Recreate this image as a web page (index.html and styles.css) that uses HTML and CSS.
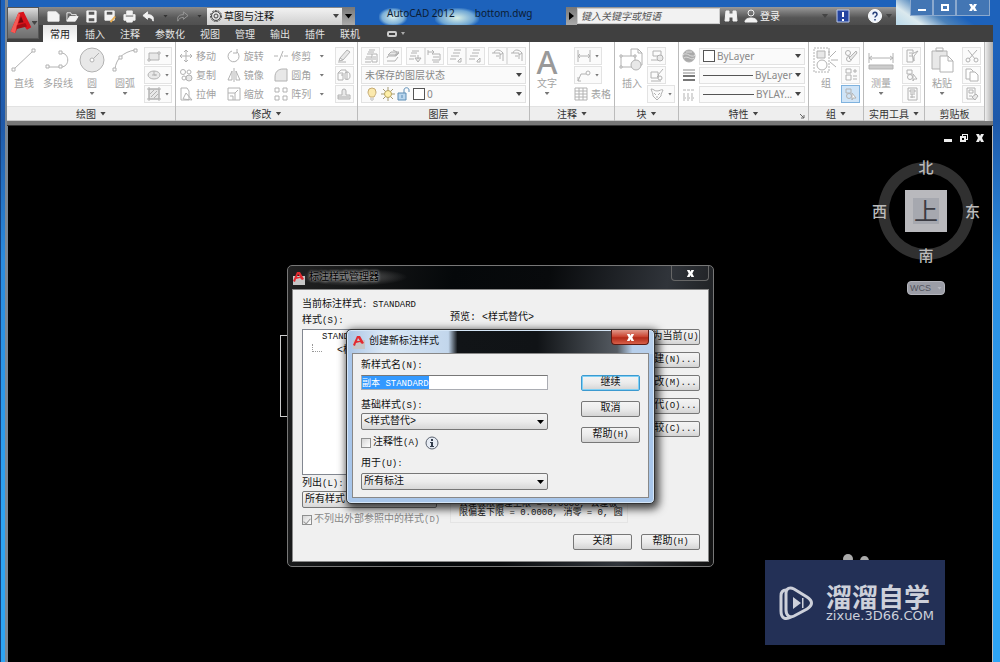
FILE: index.html
```html
<!DOCTYPE html>
<html lang="zh-CN">
<head>
<meta charset="utf-8">
<title>AutoCAD 2012 - bottom.dwg</title>
<link rel="stylesheet" href="styles.css">
</head>
<body>
<svg class="defs" aria-hidden="true">
  <symbol id="line" viewBox="0 0 26 26"><path d="M3 22 22 4"/><path class="w" d="M1 21h3v3H1zM21 2h3v3h-3z"/></symbol>
  <symbol id="pline" viewBox="0 0 26 26"><path d="M3 20h13c9 0 9-14 0-14"/><path class="w" d="M1 18h3v3H1zM14 18h3v3h-3zM14 4h3v3h-3z"/></symbol>
  <symbol id="circle" viewBox="0 0 26 26"><circle class="g" cx="13" cy="13" r="12"/><path d="m13 13 7-7"/><circle class="w" cx="13" cy="13" r="2"/></symbol>
  <symbol id="arc" viewBox="0 0 26 26"><path d="M3 22C4 12 11 5 23 3"/><path class="w" d="M1 21h3v3H1zM7 9h3v3H7zM22 2h3v3h-3z"/></symbol>
  <symbol id="rect" viewBox="0 0 14 14"><path class="g" d="M2 4h10v7H2z"/><path class="w" d="M1 10h2v2H1zM11 3h2v2h-2z"/></symbol>
  <symbol id="ell" viewBox="0 0 14 14"><ellipse class="g" cx="7" cy="7" rx="6" ry="4"/><path d="M7 3v4h3M5 7h4"/></symbol>
  <symbol id="hatch" viewBox="0 0 14 14"><path class="g" d="M2 2h10v10H2z"/><path d="M0 2h14M0 12h14M2 0v14M12 0v14M4 10l6-6M3 7l4-4M7 11l4-4"/></symbol>
  <symbol id="move" viewBox="0 0 14 14"><path d="M7 1v4M7 9v4M1 7h4M9 7h4M5 3l2-2 2 2M5 11l2 2 2-2M3 5 1 7l2 2M11 5l2 2-2 2M6 6h2v2H6z"/></symbol>
  <symbol id="copy" viewBox="0 0 14 14"><circle cx="4" cy="4" r="2.5"/><circle cx="10" cy="4" r="2"/><circle cx="5" cy="10" r="2"/><circle class="g" cx="10" cy="10" r="3"/></symbol>
  <symbol id="stretch" viewBox="0 0 14 14"><path d="M2 1h6l2 3v9H2zM4 12l3-6 6 7z"/></symbol>
  <symbol id="rotate" viewBox="0 0 14 14"><path d="M5 2a5.5 5.5 0 1 0 5 1M10 0v4h-4"/></symbol>
  <symbol id="mirror" viewBox="0 0 14 14"><path d="M7 0v14M5 3v9H1zM9 3v9h4z"/></symbol>
  <symbol id="scale" viewBox="0 0 14 14"><path d="M1 1h12v12H1zM1 6h7v7M3 9h3v4M8 6l3-3"/></symbol>
  <symbol id="trim" viewBox="0 0 14 14"><path d="M0 7h4M10 7h4M5 12 9 2M8 7h1"/></symbol>
  <symbol id="fillet" viewBox="0 0 14 14"><path class="g" d="M1 13V9c0-5 3-8 8-8h4v12z"/></symbol>
  <symbol id="array" viewBox="0 0 14 14"><path d="M1 1h4v4H1zM9 1h4v4H9zM1 9h4v4H1zM9 9h4v4H9z"/></symbol>
  <symbol id="erase" viewBox="0 0 14 14"><path class="g" d="m3 9 7-8 3 2-7 8z"/><path d="m3 9-1 3 4-1M1 13h8"/></symbol>
  <symbol id="explode" viewBox="0 0 14 14"><path d="M1 5h5v7H1zM1 5l3-3h5v3M8 5c4-2 5 0 5 3s-2 4-5 3zM4 7h2M10 3v9"/></symbol>
  <symbol id="offset" viewBox="0 0 14 14"><path class="g" d="M5 8V4a2 2 0 0 1 4 0v4h4v4H1V8zM1 10h11"/></symbol>
  <symbol id="layers" viewBox="0 0 14 14"><path d="M5 1h6M4 3h6M3 5h5M2 8h6M1 10h6M1 13h6"/><path class="w" d="M8 5h5v8H8zM9 8h3M9 10h3"/></symbol>
  <symbol id="layerb" viewBox="0 0 14 14"><path class="g" d="m2 6 3-3h8l-3 3z"/><path d="m1 9 1-2h8l3-3M1 12h8l3-4M7 1l4 2-2 4"/></symbol>
  <symbol id="layerc" viewBox="0 0 14 14"><path d="M4 2h7M3 4h6M2 7h6M1 10h5"/><path class="g" d="m7 9 3 4 3-4zM10 6v4"/></symbol>
  <symbol id="layerd" viewBox="0 0 14 14"><path d="M5 5h8v6H5M6 8h6M6 13h6M1 1v5M1 3h6l-2-2M7 3 5 5"/></symbol>
  <symbol id="layere" viewBox="0 0 14 14"><path d="M5 1h7M4 4h7M2 7h8M1 10h6M9 12l3-3v4h-3z"/></symbol>
  <symbol id="layerf" viewBox="0 0 14 14"><path d="M1 4h8v6M3 4c1-4 6-4 9 0M5 7h3M9 6l3-2v8"/></symbol>
  <symbol id="bulb" viewBox="0 0 14 14"><path d="M5 10C4 8 3 7 3 5a4 4 0 0 1 8 0c0 2-1 3-2 5z" style="fill:#fbe9ad;stroke:#c5aa72"/><path d="M5 12h4M6 14h2"/></symbol>
  <symbol id="sun" viewBox="0 0 14 14"><path style="stroke:#a59a73" d="M7 0v14M0 7h14M2 2l10 10M12 2 2 12"/><circle cx="7" cy="7" r="3.5" style="fill:#fff0a8;stroke:#b7a363"/></symbol>
  <symbol id="lock" viewBox="0 0 14 14"><path style="fill:#b8d5ed;stroke:#5c8db5" d="M1 6h8v7H1z"/><path style="stroke:#5c8db5" d="M7 6V3c0-3 5-3 5 0v2M5 8v3"/></symbol>
  <symbol id="dim" viewBox="0 0 14 14"><path d="M1 1v12M13 1v12M1 7h12M3 5 1 7l2 2M11 5l2 2-2 2"/></symbol>
  <symbol id="leader" viewBox="0 0 14 14"><path d="M1 13 4 6h5M1 9v4h3"/><circle cx="11" cy="5" r="2"/></symbol>
  <symbol id="table" viewBox="0 0 14 14"><path d="M1 1h12v12H1zM1 4h12M1 7h12M1 10h12M5 1v12M9 1v12"/></symbol>
  <symbol id="insert" viewBox="0 0 26 26"><path class="w" d="M12 2h7l4 4v12H12z"/><path d="M19 2v4h4"/><path class="w" d="M2 9h14v11H2z"/><circle class="g" cx="17" cy="18" r="5"/><path class="w" d="M1 8h2v2H1zM1 19h2v2H1zM15 8h2v2h-2z"/></symbol>
  <symbol id="blk" viewBox="0 0 14 14"><path d="M3 2h8v5H3zM1 11h8"/><circle class="g" cx="10" cy="9" r="3"/></symbol>
  <symbol id="blked" viewBox="0 0 14 14"><path d="M1 4h7v6H1zM1 13h10M8 7l5-6M7 9l2-2"/><circle cx="10" cy="10" r="2"/></symbol>
  <symbol id="attr" viewBox="0 0 14 14"><path d="M1 2c3 0 3 2 6 2s4-2 6-1c-1 3-2 3-2 6l-4 4-4-4c0-3-1-4-2-7zM4 6l2 2M10 6 8 8M6 10h2"/></symbol>
  <symbol id="globe" viewBox="0 0 14 14"><circle cx="7" cy="7" r="6" style="fill:#aaa"/><path style="stroke:#ddd" d="M1 6c4-4 8 4 12 0M2 9c4-3 7 3 10 0M4 3h6"/></symbol>
  <symbol id="lw" viewBox="0 0 14 14"><path style="stroke:#888" d="M1 2h12M1 5h12"/><path style="stroke:#777;stroke-width:2" d="M1 8h12M1 12h12"/></symbol>
  <symbol id="lt" viewBox="0 0 14 14"><path d="M1 3h12M1 11h12" stroke-dasharray="3 1"/><path d="M1 7h12M1 9h12M1 13h12" stroke-dasharray="2 2"/></symbol>
  <symbol id="group" viewBox="0 0 26 26"><path stroke-dasharray="2 1" d="M1 1h15v24H1z"/><path class="g" d="M4 4h8v7H4z"/><circle cx="9" cy="18" r="5"/><path d="m17 10 6-6M18 13h7M17 15l6 5M16 8V3"/></symbol>
  <symbol id="ungr" viewBox="0 0 14 14"><circle cx="4" cy="4" r="2.5"/><circle cx="5" cy="10" r="2.5"/><path class="g" d="m5 9 7-7 1 2-6 7z"/></symbol>
  <symbol id="gred" viewBox="0 0 14 14"><path d="M2 1h5v4H2zM2 7h5v5H2zM9 3h4M11 1v4M9 8h4M9 11h4"/></symbol>
  <symbol id="grsel" viewBox="0 0 14 14"><path d="M2 2h5v4H2z"/><circle cx="5" cy="9" r="2.5"/><path class="w" d="m8 6 4 5H9l-1 2z"/></symbol>
  <symbol id="measure" viewBox="0 0 26 26"><path d="M1 6v10M25 6v10M1 11h24M4 9l-3 2 3 2M22 9l3 2-3 2"/><path style="fill:#ccc" d="M1 18h24v4H1z"/></symbol>
  <symbol id="qsel" viewBox="0 0 14 14"><path d="M2 1h6v12H2zM4 4h3M4 7h3"/><path class="w" d="m7 5 6-3-4 5v5z"/></symbol>
  <symbol id="calc" viewBox="0 0 14 14"><path d="M3 1h9v12H3zM5 3h5v2H5zM5 7h5M5 10h5M7 7v4"/></symbol>
  <symbol id="paste" viewBox="0 0 26 26"><path class="g" d="M3 4h15v18H3z"/><path d="M7 4V1h7v3z"/><path class="w" d="M11 9h8l5 5v11H11z"/><path d="M19 9v5h5"/></symbol>
  <symbol id="cut" viewBox="0 0 14 14"><path d="m3 1 7 9M12 1 4 10"/><circle cx="3" cy="11" r="2"/><circle cx="11" cy="11" r="2"/></symbol>
  <symbol id="copyc" viewBox="0 0 14 14"><path class="w" d="M1 1h5l2 2v8H1z"/><path class="w" d="M5 4h5l3 3v6H5z"/></symbol>
  <symbol id="match" viewBox="0 0 14 14"><path d="M2 1h8v11H2zM4 3h4v3H4zM4 9h3"/><path class="g" d="m7 10 4-3 2 2-3 4z"/></symbol>
  <symbol id="acad" viewBox="0 0 28 30"><path d="M2 25 11 3l6-1 9 18-5 3-3-4-8 2-3 6z" fill="#d9131b"/><path d="m11 3 2 2-6 22-5-2z" fill="#f45a55"/><path d="m11 15 3-8 3 7z" fill="#75080e"/><path d="m9 18 10-3 2 4-12 3z" fill="#a60c13"/></symbol>
</svg>

<div class="window">
  <header class="head">
    <button class="app" aria-label="应用程序菜单"><svg><use href="#acad"/></svg><i class="ar dk"></i></button>
    <div class="titlebar">
      <div class="quick">
        <button aria-label="新建"><svg viewBox="0 0 14 14"><path class="f" d="M1 2h9l3 3v7H1z"/></svg></button>
        <button aria-label="打开"><svg viewBox="0 0 14 14"><path d="M1 12V3h4l1 2h5v2"/><path class="f" d="m1 12 3-5h9l-3 5z"/></svg></button>
        <button aria-label="保存"><svg viewBox="0 0 14 14"><path class="f" d="M2 1h10v12H2z"/><path class="n" d="M4 2h6v3H4zM4 9h6v3H4z"/></svg></button>
        <button aria-label="另存为"><svg viewBox="0 0 14 14"><path class="f" d="M1 1h10v10H1z"/><path class="n" d="M3 2h6v3H3z"/><path d="m7 13 5-6" style="stroke:#e9ae52;stroke-width:2"/></svg></button>
        <button aria-label="打印"><svg viewBox="0 0 14 14"><path class="f" d="M4 1h6v4h3v6H1V5h3z"/><path class="n" d="M3 6h8v1H3z"/><path class="f" d="M4 9h6v4H4z"/></svg></button>
        <button aria-label="放弃"><svg viewBox="0 0 14 14"><path class="f" d="m1 6 5-4v3c5 0 7 2 6 7-1-3-3-4-6-4v2z"/></svg></button><i class="ar"></i>
        <button class="dim" aria-label="重做"><svg viewBox="0 0 14 14"><path d="M13 6 8 2v3C3 5 1 7 2 12c1-3 3-4 6-4v2z"/></svg></button><i class="ar"></i>
        <label class="space"><svg viewBox="0 0 14 14"><circle cx="7" cy="7" r="5.5" stroke-dasharray="2 1"/><circle cx="7" cy="7" r="4.5"/><circle cx="7" cy="7" r="2"/></svg><select aria-label="工作空间"><option>草图与注释</option></select><i class="ar dk"></i></label>
        <button class="more" aria-label="自定义"><i class="ar bk"></i></button>
      </div>
      <h1 class="caption"><span>AutoCAD 2012</span><span>bottom.dwg</span></h1>
      <div class="info">
        <button class="fold" aria-label="折叠"></button>
        <input type="text" aria-label="搜索" placeholder="键入关键字或短语">
        <button aria-label="搜索"><svg viewBox="0 0 14 14"><path class="f" d="M2 2h3v3h4V2h3l1 10H9V8H5v4H1z"/></svg></button>
        <button class="login"><svg viewBox="0 0 14 14"><circle cx="7" cy="4" r="3"/><path class="f" d="M1 13c0-3 3-4 6-4s6 1 6 4z"/></svg>登录</button>
        <i class="ar dk push"></i>
        <button aria-label="通讯" class="exch"><svg viewBox="0 0 14 14"><path style="fill:#2444a0;stroke:#b9c8ec" d="M1 1h12v12H1z"/><path d="M7 3v5M7 10v2" style="stroke:#fff;stroke-width:2"/></svg></button>
        <button aria-label="帮助"><svg viewBox="0 0 14 14"><circle cx="7" cy="7" r="6.5" style="fill:#eef3fb;stroke:#fff"/><path d="M5 5.500c0-3 4-3 4 0 0 1.500-2 1.500-2 3M7 10v1.500" style="stroke:#27407c;stroke-width:1.500"/></svg></button><i class="ar dk"></i>
      </div>
      <div class="sys">
        <button aria-label="最小化"><svg viewBox="0 0 10 10"><path d="M1 6h8v2H1z"/></svg></button>
        <button aria-label="还原"><svg viewBox="0 0 10 10"><path fill-rule="evenodd" d="M1 1h8v7H1zM3 3v3h4V3z"/></svg></button>
        <button aria-label="关闭" class="x"><svg viewBox="0 0 10 10"><path d="M1 1h3l1 2 1-2h3L7 4.500 9 8H6L5 6 4 8H1l2-3.500z"/></svg></button>
      </div>
    </div>
    <nav class="tabs">
      <button class="on">常用</button><button>插入</button><button>注释</button><button>参数化</button><button>视图</button><button>管理</button><button>输出</button><button>插件</button><button>联机</button>
      <button class="mini" aria-label="最小化功能区"><b></b><i class="ar"></i></button>
    </nav>
  </header>

  <div class="ribbon">
    <section class="panel">
      <div class="body">
        <button class="big"><svg><use href="#line"/></svg>直线</button>
        <button class="big"><svg><use href="#pline"/></svg>多段线</button>
        <button class="big"><svg><use href="#circle"/></svg>圆<i class="ar"></i></button>
        <button class="big"><svg><use href="#arc"/></svg>圆弧<i class="ar"></i></button>
        <div class="col"><button class="sq sp" aria-label="矩形"><svg><use href="#rect"/></svg><i class="ar"></i></button><button class="sq sp" aria-label="椭圆"><svg><use href="#ell"/></svg><i class="ar"></i></button><button class="sq sp" aria-label="图案填充"><svg><use href="#hatch"/></svg><i class="ar"></i></button></div>
      </div>
      <h2>绘图<i class="ar dk"></i></h2>
    </section>
    <section class="panel">
      <div class="body">
        <div class="col"><button class="tl"><svg><use href="#move"/></svg>移动</button><button class="tl"><svg><use href="#copy"/></svg>复制</button><button class="tl"><svg><use href="#stretch"/></svg>拉伸</button></div>
        <div class="col"><button class="tl"><svg><use href="#rotate"/></svg>旋转</button><button class="tl"><svg><use href="#mirror"/></svg>镜像</button><button class="tl"><svg><use href="#scale"/></svg>缩放</button></div>
        <div class="col"><button class="tl"><svg><use href="#trim"/></svg>修剪<i class="ar"></i></button><button class="tl"><svg><use href="#fillet"/></svg>圆角<i class="ar"></i></button><button class="tl"><svg><use href="#array"/></svg>阵列<i class="ar"></i></button></div>
        <div class="col"><button class="sq" aria-label="删除"><svg><use href="#erase"/></svg></button><button class="sq" aria-label="分解"><svg><use href="#explode"/></svg></button><button class="sq" aria-label="偏移"><svg><use href="#offset"/></svg></button></div>
      </div>
      <h2>修改<i class="ar dk"></i></h2>
    </section>
    <section class="panel">
      <div class="body"><div class="col wide">
        <div class="row"><button class="sq" aria-label="图层特性"><svg><use href="#layers"/></svg></button><button class="sq" aria-label="置为当前"><svg><use href="#layerb"/></svg></button><span class="pair"><button class="sq" aria-label="匹配"><svg><use href="#layerc"/></svg></button><button class="sq" aria-label="上一个"><svg><use href="#layerd"/></svg></button></span><span class="pair"><button class="sq" aria-label="隔离"><svg><use href="#layere"/></svg></button><button class="sq" aria-label="取消隔离"><svg><use href="#layere"/></svg></button></span><span class="pair"><button class="sq" aria-label="冻结"><svg><use href="#layerf"/></svg></button><button class="sq" aria-label="关闭图层"><svg><use href="#layerf"/></svg></button></span></div>
        <div class="cb"><select aria-label="图层状态"><option>未保存的图层状态</option></select><i class="ar dk"></i></div>
        <div class="cb"><svg><use href="#bulb"/></svg><svg><use href="#sun"/></svg><svg><use href="#lock"/></svg><b class="sw"></b><select aria-label="图层"><option>0</option></select><i class="ar dk"></i></div>
      </div></div>
      <h2>图层<i class="ar dk"></i></h2>
    </section>
    <section class="panel">
      <div class="body">
        <button class="big"><span class="letter">A</span>文字<i class="ar"></i></button>
        <div class="col"><button class="sq sp" aria-label="线性"><svg><use href="#dim"/></svg><i class="ar"></i></button><button class="sq sp" aria-label="引线"><svg><use href="#leader"/></svg><i class="ar"></i></button><button class="tl"><svg><use href="#table"/></svg>表格</button></div>
      </div>
      <h2>注释<i class="ar dk"></i></h2>
    </section>
    <section class="panel">
      <div class="body">
        <button class="big"><svg><use href="#insert"/></svg>插入</button>
        <div class="col"><button class="sq" aria-label="创建"><svg><use href="#blk"/></svg></button><button class="sq" aria-label="编辑"><svg><use href="#blked"/></svg></button><button class="sq sp" aria-label="编辑属性"><svg><use href="#attr"/></svg><i class="ar"></i></button></div>
      </div>
      <h2>块<i class="ar dk"></i></h2>
    </section>
    <section class="panel">
      <div class="body"><div class="col wide">
        <div class="row"><svg><use href="#globe"/></svg><div class="cb"><b class="sw"></b><select aria-label="对象颜色"><option>ByLayer</option></select><i class="ar dk"></i></div></div>
        <div class="row"><svg><use href="#lw"/></svg><div class="cb"><b class="ln"></b><select class="end" aria-label="线宽"><option>ByLayer</option></select><i class="ar dk"></i></div></div>
        <div class="row"><svg><use href="#lt"/></svg><div class="cb"><b class="ln"></b><select class="end" aria-label="线型"><option>BYLAY...</option></select><i class="ar dk"></i></div></div>
      </div></div>
      <h2>特性<i class="ar dk"></i><svg class="launch" viewBox="0 0 6 6"><path d="m1 1 4 4M5 2v3H2"/></svg></h2>
    </section>
    <section class="panel">
      <div class="body">
        <button class="big"><svg><use href="#group"/></svg>组</button>
        <div class="col"><button class="sq" aria-label="解除编组"><svg><use href="#ungr"/></svg></button><button class="sq" aria-label="组编辑"><svg><use href="#gred"/></svg></button><button class="sq sel" aria-label="组选择"><svg><use href="#grsel"/></svg></button></div>
      </div>
      <h2>组<i class="ar dk"></i></h2>
    </section>
    <section class="panel">
      <div class="body">
        <button class="big"><svg><use href="#measure"/></svg>测量<i class="ar"></i></button>
        <div class="col"><button class="sq" aria-label="快速选择"><svg><use href="#qsel"/></svg></button><button class="sq" aria-label="全部选择"><svg><use href="#grsel"/></svg></button><button class="sq" aria-label="计算器"><svg><use href="#calc"/></svg></button></div>
      </div>
      <h2>实用工具<i class="ar dk"></i></h2>
    </section>
    <section class="panel">
      <div class="body">
        <button class="big"><svg><use href="#paste"/></svg>粘贴<i class="ar"></i></button>
        <div class="col"><button class="sq" aria-label="剪切"><svg><use href="#cut"/></svg></button><button class="sq" aria-label="复制剪裁"><svg><use href="#copyc"/></svg></button><button class="sq" aria-label="特性匹配"><svg><use href="#match"/></svg></button></div>
      </div>
      <h2>剪贴板</h2>
    </section>
    <div class="rest"></div>
  </div>

  <main class="canvas">
    <div class="doc">
      <button aria-label="最小化图形"><svg viewBox="0 0 10 10"><path d="M1 6h8v3H1z"/></svg></button>
      <button aria-label="还原图形"><svg viewBox="0 0 10 10"><path fill-rule="evenodd" d="M3 1h6v6H7v2H1V3h2zM3 5v2h2V5zM4 2v1h3v3h1V2z"/></svg></button>
      <button aria-label="关闭图形"><svg viewBox="0 0 10 10"><path d="M1 1h3l1 2 1-2h3L7 5l2 4H6L5 7 4 9H1l2-4z"/></svg></button>
    </div>
    <div class="compass">
      <span class="no">北</span><span class="we">西</span><span class="top">上</span><span class="ea">东</span><span class="so">南</span>
    </div>
    <button class="wcs">WCS <i class="ar"></i></button>
    <div class="shape"></div>

    <section class="dlg manager" aria-label="标注样式管理器">
      <div class="bar"><svg class="logo" viewBox="0 0 14 14"><path fill="#c6c6c6" d="M1 5h12v9H1z"/><path fill="#e22a30" d="m1 10 4-9h3l4 7-2 1-2-2-4 1-1 3zM6 3 5 6h3z"/></svg><h3>标注样式管理器</h3><button class="close" aria-label="关闭"><svg viewBox="0 0 10 10"><path d="M1 1h3l1 2 1-2h3L7 5l2 4H6L5 7 4 9H1l2-4z"/></svg></button></div>
      <div class="pane">
        <div class="cols">
          <div class="left">
            <p>当前标注样式<span class="m">: STANDARD</span></p>
            <p>样式<span class="m">(S):</span></p>
            <ul class="list"><li><span class="m">STANDARD</span></li><li class="sub">&lt;样式替代&gt;</li></ul>
            <label for="show">列出<span class="m">(L):</span></label>
            <div class="combo"><select id="show"><option>所有样式</option></select></div>
            <label class="ck off"><input type="checkbox" checked disabled><span>不列出外部参照中的样式<span class="m">(D)</span></span></label>
          </div>
          <div class="mid">
            <p>预览: &lt;样式替代&gt;</p>
            <div class="note">公差极限偏差上限 = 0.0000, 公差极限偏差下限 = 0.0000, 消零 = 0, 圆</div>
          </div>
          <div class="acts">
            <button class="btn">置为当前<span class="m">(U)</span></button>
            <button class="btn">新建<span class="m">(N)...</span></button>
            <button class="btn">修改<span class="m">(M)...</span></button>
            <button class="btn">替代<span class="m">(O)...</span></button>
            <button class="btn">比较<span class="m">(C)...</span></button>
          </div>
        </div>
        <div class="foot"><button class="btn">关闭</button><button class="btn">帮助<span class="m">(H)</span></button></div>
      </div>
    </section>

    <section class="dlg create" aria-label="创建新标注样式">
      <div class="bar"><svg class="logo" viewBox="0 0 14 14"><path fill="#c6c6c6" d="M1 5h12v9H1z"/><path fill="#e22a30" d="m1 10 4-9h3l4 7-2 1-2-2-4 1-1 3zM6 3 5 6h3z"/></svg><h3>创建新标注样式</h3><button class="close" aria-label="关闭"><svg viewBox="0 0 10 10"><path d="M1 1h3l1 2 1-2h3L7 5l2 4H6L5 7 4 9H1l2-4z"/></svg></button></div>
      <div class="pane">
        <div class="form">
          <label for="name">新样式名<span class="m">(N):</span></label>
          <input id="name" class="txt" type="text" value="副本 STANDARD">
          <label for="base">基础样式<span class="m">(S):</span></label>
          <div class="combo"><select id="base"><option>&lt;样式替代&gt;</option></select></div>
          <div class="ann"><label class="ck"><input type="checkbox"><span>注释性<span class="m">(A)</span></span></label><svg viewBox="0 0 14 14"><circle cx="7" cy="7" r="6" fill="#e6ebf3" stroke="#59616e"/><path fill="#333d4c" d="M6 3h2v2H6zM5 6h3v4h1v1H5v-1h1V7H5z"/></svg></div>
          <label for="use">用于<span class="m">(U):</span></label>
          <div class="combo"><select id="use"><option>所有标注</option></select></div>
        </div>
        <div class="side"><button class="btn def">继续</button><button class="btn">取消</button><button class="btn">帮助<span class="m">(H)</span></button></div>
      </div>
    </section>

    <div class="ears"><i></i><i></i></div>
    <div class="brand">
      <svg viewBox="0 0 36 36"><path d="M7 5C3 5 2 8 2 11v15c0 8 5 9 10 6" /><path d="M7 25V8c0-5 4-6 8-4l13 8c6 4 6 8 0 12l-13 7c-4 2-8 0-8-6z"/><path class="p" d="m14 12 8 6-8 6zM23 13h1.500v10H23z"/></svg>
      <div><strong>溜溜自学</strong><span>zixue.3D66.COM</span></div>
    </div>
  </main>
</div>
<script src="app.js"></script>
</body>
</html>
```
FILE: styles.css
```css
* { box-sizing: border-box; }
body { margin: 0; font: 10px/14px "Noto Sans", "Noto Sans CJK SC", sans-serif; color: #222; background: #000; }
h1, h2, h3, p, ul { margin: 0; padding: 0; font-size: inherit; font-weight: normal; list-style: none; }
button, input, select { font: inherit; color: inherit; margin: 0; padding: 0; border: 0; background: none; border-radius: 0; }
select { appearance: none; min-width: 0; }
button { display: flex; align-items: center; justify-content: center; white-space: nowrap; }
svg { width: 14px; height: 14px; flex: none; display: block; }
.defs { position: absolute; width: 0; height: 0; }
.ar { flex: none; width: 5px; height: 3px; background: #777; clip-path: polygon(0 0, 100% 0, 50% 100%); }
.ar.dk { background: #444; width: 6px; height: 4px; }
.ar.bk { background: #000; width: 8px; height: 5px; }

.window { display: flex; flex-direction: column; min-height: 100vh; padding: 0 7px; background: linear-gradient(90deg, #16407e 1px, transparent 1px 5px, #7b8794 5px 8px, transparent 8px), linear-gradient(#1d62bb 0 50px, #1e58a8 120px, #2a8ce0 260px, #2ea4f4 520px); }

.head { display: grid; grid-template-columns: 32px 1fr; grid-template-rows: 25px 17px; }
.app { grid-column: 1; grid-row: 1 / 3; align-self: end; z-index: 1; height: 32px; margin-bottom: 3px; border: 1px solid #555; background: linear-gradient(#ddd, #8c8c8c 50%, #6e6e6e); }
.app svg { width: 24px; height: 28px; }
.app .ar { margin-left: -1px; }
.titlebar { grid-column: 2; grid-row: 1; display: flex; min-width: 0; }
.quick, .info { display: flex; align-items: center; margin-top: 7px; height: 18px; background: linear-gradient(#8b8b8b, #585858 60%, #505050); }
.quick { width: 316px; padding-left: 5px; color: #e6e6e6; }
.quick > button { width: 19px; flex: none; }
.quick svg, .info svg { fill: none; stroke: #f2f2f2; }
.quick > button svg { width: 13px; height: 13px; }
.titlebar .f { fill: #f2f2f2; }
.titlebar .n { fill: #575757; stroke: none; }
.quick > .ar { margin: 0 5px; background: #333; }
.quick .dim svg { stroke: #999; }
.space { display: flex; align-items: center; flex: 1; height: 17px; padding: 0 3px 0 2px; background: linear-gradient(#f2f2f2, #cfcfcf); color: #111; }
.space svg { stroke: #444; }
.space select { flex: 1; margin-left: 1px; }
.quick .more { width: 13px; height: 18px; background: linear-gradient(#777, #aaa); }
.caption { flex: 1; display: flex; gap: 20px; align-items: center; padding-left: 32px; height: 25px; font-size: 10px; white-space: nowrap; color: #0b1c33; background: radial-gradient(ellipse at center, #d8efee 0, #7db0d8 55%, transparent 75%) 24px 8px / 28px 18px no-repeat, radial-gradient(ellipse at center, #d8efe6 0, #6ea6d4 55%, transparent 75%) 80px 8px / 44px 20px no-repeat; }
.info { width: 330px; background: linear-gradient(#9a9a9a, #555 60%, #4c4c4c); color: #f4f4f4; }
.info .fold { width: 11px; height: 18px; background: linear-gradient(#777, #aaa); }
.fold::before { content: ""; border: 4px solid transparent; border-left: 5px solid #000; border-right: 0; }
.info input { width: 143px; height: 16px; padding-left: 3px; background: #f2f2f2; border: 1px solid #ccc; font-style: italic; }
.info input::placeholder { color: #555; }
.info > button { margin-left: 4px; }
.info > .fold { margin-left: 0; }
.info .login { gap: 2px; margin-left: 6px; }
.info .push { margin-left: auto; }
.info .exch { margin: 0 14px 0 8px; }
.info > .ar:last-child { margin: 0 4px; }
.sys { display: flex; align-items: flex-start; justify-content: flex-end; width: 97px; padding-right: 3px; height: 25px; background: linear-gradient(35deg, #b9d9ea 0, #dbe9ee 20%, #4d83bb 40%, transparent 60%); }
.sys button { width: 23px; height: 16px; border: 1px solid #8ba9ce; border-top: 0; background: #4376b4; }
.sys .x { width: 34px; }
.sys svg { width: 10px; height: 10px; fill: #fff; }
.tabs { grid-column: 1 / 3; grid-row: 2; display: flex; gap: 1px; padding-left: 36px; background: #404040; color: #e4e4e4; }
.tabs button { padding: 0 7px; height: 17px; }
.tabs .on { background: linear-gradient(#e4e4e4, #fff); color: #222; }
.tabs .mini { gap: 4px; padding: 0 19px; }
.mini b { width: 10px; height: 6px; border: 2px solid #ccc; border-radius: 2px; }
.mini .ar { background: #aaa; width: 4px; }

.ribbon { display: grid; grid-template-columns: 169fr 182fr 172fr 85fr 64fr 130fr 55fr 61fr 60fr 8px; border-bottom: 4px solid #777; box-shadow: 0 1px 0 #333; color: #a2a2a2; background: #fff; }
.panel { display: flex; flex-direction: column; min-width: 0; border-right: 1px solid #bbb; }
.panel svg { fill: none; stroke: #b2b2b2; }
svg .w { fill: #fff; }
svg .g { fill: #e8e8e8; }
.body { flex: 1; display: flex; justify-content: space-between; padding: 5px 3px 3px; }
.panel h2 { display: flex; align-items: center; justify-content: center; gap: 4px; height: 15px; background: #eee; border-top: 1px solid #e2e2e2; border-bottom: 1px solid #ccc; color: #333; white-space: nowrap; }
.panel .launch { width: 6px; height: 6px; margin: 4px 3px 0 auto; stroke: #666; }
.panel h2:has(.launch)::before { content: ""; margin-right: auto; width: 9px; }
.big { flex-direction: column; justify-content: flex-start; min-width: 28px; }
.big svg { width: 26px; height: 26px; margin-bottom: 3px; }
.big .ar { margin-top: 2px; }
.letter { font: 500 32px/29px "Noto Sans", sans-serif; color: #999; }
.col { display: flex; flex-direction: column; gap: 1px; align-items: flex-start; }
.col.wide { flex: 1; align-items: stretch; min-width: 0; }
.sq { width: 19px; height: 18px; border: 1px solid #e3e3e3; background: #fbfbfb; }
.sq.sp { width: 28px; gap: 4px; }
.sq.sp .ar { width: 4px; }
.sq.sel { background: #cfe4f7; border-color: #7fb2de; }
.tl { height: 18px; gap: 3px; }
.tl .ar { margin-left: 5px; }
.row { display: flex; justify-content: space-between; align-items: center; gap: 3px; height: 18px; }
.pair { display: flex; }
.cb { flex: 1; display: flex; align-items: center; gap: 2px; min-width: 0; height: 17px; padding: 0 3px; border: 1px solid #e2e2e2; background: #fafafa; color: #888; }
.col > .cb { flex: none; height: 18px; }
.cb select { flex: 1; }
.cb .end { flex: none; }
.cb .ar { margin-left: auto; }
.sw { flex: none; width: 12px; height: 12px; border: 1px solid #555; background: #fff; }
.ln { flex: 1; height: 1px; background: #555; }
.rest { background: linear-gradient(90deg, #eee, #aaa); }

.canvas { position: relative; flex: 1; margin-top: 1px; margin-left: 1px; background: #000; border-right: 1px solid #bbb; }
.doc { display: flex; justify-content: flex-end; gap: 6px; padding: 7px 7px 0 0; }
.doc svg { width: 10px; height: 10px; fill: #eee; }
.compass { position: absolute; right: 18px; top: 36px; width: 96px; height: 98px; border: 11px solid #303030; border-radius: 50%; display: grid; place-items: center; color: #bbb; font: 500 15px/16px "Noto Sans CJK SC", sans-serif; }
.compass span { position: absolute; }
.compass .no { top: -14px; }
.compass .so { bottom: -14px; }
.compass .we { left: -17px; }
.compass .ea { right: -17px; }
.compass .top { width: 42px; height: 42px; border: 8px solid #b9b9bd; background: #a6a8af; color: #3b3b42; font-size: 24px; line-height: 24px; text-align: center; font-weight: 400; }
.wcs { position: absolute; right: 47px; top: 155px; width: 38px; height: 14px; border-radius: 4px; background: #9b9da6; border: 1px solid #b4b5bc; color: #535560; gap: 6px; font-family: "Liberation Sans", sans-serif; font-size: 9px; }
.wcs .ar { background: #b6b8c0; }
.shape { position: absolute; left: 272px; top: 209px; width: 60px; height: 82px; border: 1px solid #ccc; }

.dlg { position: absolute; font-family: "Liberation Mono", "Noto Sans CJK SC", monospace; color: #111; line-height: 14px; border-radius: 5px; }
.dlg .m { font-size: 9px; }
.dlg p, .dlg label { white-space: nowrap; }
.bar { display: flex; align-items: center; height: 23px; }
.bar h3 { padding: 0 3px; }
.bar .close { margin-left: auto; align-self: flex-start; width: 38px; height: 15px; border: 1px solid #666; border-top: 0; border-radius: 0 0 4px 4px; }
.close svg { width: 9px; height: 9px; fill: #fff; }
.pane { border: 1px solid #888; background: #f0f0f0; }
.manager { left: 279px; top: 139px; width: 427px; padding: 0 4px 4px; border: 1px solid #777; background: radial-gradient(ellipse at center, #666 0, transparent 70%) 10px 2px / 110px 18px no-repeat, linear-gradient(100deg, #222 0, #05080a 35%, #080a0c 55%, #30343a 80%, #111 100%); }
.manager .pane { padding: 8px 8px 11px 9px; }
.manager .bar h3 { color: #000; text-shadow: 0 0 3px #aaa, 0 0 3px #999; }
.cols { display: grid; grid-template-columns: 135px 178px 59px; justify-content: space-between; }
.left { display: flex; flex-direction: column; }
.left p + p { margin-top: 2px; }
.list { height: 146px; margin: 1px 0 2px; padding: 0 19px; background: #fff; border: 1px solid #828790; line-height: 13px; overflow: hidden; white-space: nowrap; }
.list .sub { margin-left: -10px; padding-left: 25px; position: relative; }
.list .sub::before { content: ""; position: absolute; left: 0; top: 0; width: 9px; height: 7px; border: 1px dotted #999; border-width: 0 0 1px 1px; }
.combo { position: relative; }
.combo select { display: block; width: 100%; height: 17px; padding-left: 2px; border: 1px solid #777; border-radius: 2px; background: linear-gradient(#f4f4f4, #ececec 50%, #d8d8d8); }
.combo::after { content: ""; position: absolute; right: 4px; top: 7px; width: 7px; height: 4px; background: #000; clip-path: polygon(0 0, 100% 0, 50% 100%); }
.ck { display: flex; align-items: center; gap: 2px; }
.ck input { appearance: none; flex: none; width: 10px; height: 10px; border: 1px solid #8e8f8f; background: linear-gradient(135deg, #d5d5d5, #fff); }
.ck input:checked { display: grid; place-items: center; }
.ck input:checked::before { content: ""; width: 3px; height: 6px; border: solid #999; border-width: 0 1px 1px 0; rotate: 40deg; }
.off { margin-top: 5px; color: #888; }
.mid { display: flex; flex-direction: column; justify-content: space-between; padding: 13px 0 4px; }
.note { padding: 0 4px 4px 8px; border: 1px solid #e4e4e4; border-top: 0; font-size: 9px; line-height: 9px; }
.acts { display: flex; flex-direction: column; gap: 7px; padding-top: 31px; }
.btn { width: 59px; height: 16px; border: 1px solid #777; border-radius: 2px; background: linear-gradient(#f4f4f4, #ebebeb 50%, #d4d4d4); }
.foot { display: flex; justify-content: flex-end; gap: 9px; margin-top: 7px; }

.create { left: 338px; top: 203px; width: 309px; padding: 0 5px 5px; border: 1px solid #333; box-shadow: inset 0 0 0 1px #d5e6f7, 2px 3px 9px 2px rgba(0, 0, 0, .75); background: linear-gradient(90deg, #a9c4e4 0, #dce9f6 12%, #c2d6ec 33%, #111417 36%, #101316 62%, #555b62 88%, #b7cfeb 93%) 0 0 / 100% 24px no-repeat, #a8c6ea; }
.create .close { border-color: #5d1a12; background: linear-gradient(#e09a8c, #c9402c 50%, #b02a18 55%, #d8604a); }
.create .pane { display: flex; justify-content: space-between; padding: 5px 8px 7px 8px; }
.form { display: flex; flex-direction: column; width: 187px; }
.form > label { height: 14px; }
.form > label[for="base"] { margin-top: 9px; }
.form > label[for="use"] { margin: 6px 0 2px; }
.txt { height: 15px; margin-top: 2px; border: 1px solid #abadb3; border-top-color: #777; background: #fff; font-size: 9px; outline: 0; }
.txt::selection { background: #3399ff; color: #fff; }
.ann { display: flex; align-items: center; gap: 6px; height: 16px; margin-top: 5px; }
.side { display: flex; flex-direction: column; gap: 10px; padding-top: 16px; }
.def { border-color: #3c9ad0; box-shadow: inset 0 0 0 1px #7fd0f5; }

.ears { position: absolute; right: 123px; bottom: 96px; display: flex; gap: 7px; }
.ears i { width: 10px; height: 10px; border-radius: 50%; background: #aaa; }
.ears i + i { margin-top: 2px; width: 9px; }
.brand { position: absolute; right: 47px; bottom: 17px; width: 180px; height: 85px; display: flex; align-items: center; gap: 11px; padding-left: 14px; background: #233056; color: #cdd0da; white-space: nowrap; }
.brand svg { width: 36px; height: 36px; fill: none; stroke: #cdd0da; stroke-width: 3; }
.brand .p { fill: #cdd0da; stroke: none; }
.brand div { display: flex; flex-direction: column; }
.brand strong { font: bold 26px/27px "Noto Sans CJK SC", sans-serif; }
.brand span { font: 13px/14px "DejaVu Sans", sans-serif; }
```
FILE: app.js
```js
const nameField = document.getElementById("name");
nameField.focus();
nameField.select();
```
